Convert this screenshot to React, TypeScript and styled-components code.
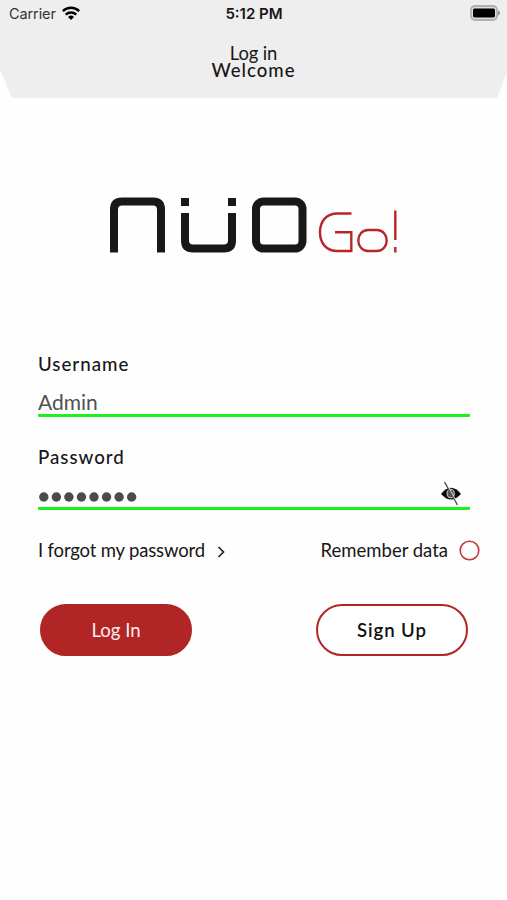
import React from 'react';
import styled, { createGlobalStyle } from 'styled-components';

const Global = createGlobalStyle`
  * { box-sizing: border-box; }
  body { margin: 0; background: #fefefe; }
`;

const Screen = styled.main`
  width: 507px;
  height: 900px;
  overflow: hidden;
  background: #fefefe;
  color: #171717;
  font-family: Lato, sans-serif;
  font-size: 18px;
`;

const Header = styled.header`
  height: 98px;
  background: #eee;
  clip-path: polygon(0 0, 100% 0, 100% 72px, 505px 77px, 497px 98px, 12px 98px, 2px 74px, 0 71px);
`;

const StatusBar = styled.div`
  height: 28px;
  padding: 0 6px 0 9px;
  display: grid;
  grid-template-columns: 1fr auto 1fr;
  align-items: center;
  font-family: Inter, sans-serif;
  font-size: 14.5px;
  line-height: 28px;
`;

const Carrier = styled.div`
  display: flex;
  align-items: center;
  gap: 6px;
  color: #333;
  letter-spacing: -0.1px;
  svg { margin-top: -2px; }
`;

const Clock = styled.div`
  margin-left: -2px;
  font-weight: 600;
  font-size: 15px;
`;

const Battery = styled.svg`
  justify-self: end;
  margin-top: -2px;
`;

const Titles = styled.div`
  padding-top: 17px;
`;

const Title = styled.h1<{ $spaced?: boolean }>`
  margin: 0;
  text-align: center;
  font-size: ${(p) => (p.$spaced ? '18.6px' : '18.4px')};
  line-height: 17px;
  font-weight: ${(p) => (p.$spaced ? 500 : 400)};
  letter-spacing: ${(p) => (p.$spaced ? '1px' : '-0.1px')};
`;

const Logo = styled.svg`
  display: block;
  margin: 92px 0 0 100px;
`;

const Form = styled.form`
  padding: 80px 37px 0 38px;
`;

const Field = styled.div`
  height: 93px;
`;

const Label = styled.label`
  display: block;
  height: 28px;
  line-height: 29px;
  font-size: 18.7px;
  font-weight: 500;
  letter-spacing: 1px;
`;

const InputRow = styled.div`
  height: 39px;
  padding: 0 8px 0 0;
  display: flex;
  justify-content: space-between;
  align-items: center;
  border-bottom: 3px solid #1cf01f;
  border-radius: 1px;
  color: #505050;
  font-size: 21px;
  line-height: 26px;
`;

const Value = styled.span`
  padding-top: 11px;
`;

const MaskedValue = styled.svg`
  margin: 16px 0 0 1px;
`;

const HiddenEye = styled.svg`
  margin-top: 8px;
`;

const Options = styled.div`
  height: 28px;
  margin-right: -10px;
  display: flex;
  justify-content: space-between;
  align-items: center;
  font-size: 18.5px;
`;

const Option = styled.div<{ $gap: number; $spacing: number }>`
  display: flex;
  align-items: center;
  gap: ${(p) => p.$gap}px;
  letter-spacing: ${(p) => p.$spacing}px;
`;

const Chevron = styled.svg`
  margin-top: 3px;
`;

const Actions = styled.div`
  margin-top: 40px;
  padding: 0 2px;
  display: flex;
  justify-content: space-between;
`;

const Button = styled.button<{ $primary?: boolean }>`
  width: 152px;
  height: 52px;
  padding: 0;
  border: 2px solid #b12525;
  border-radius: 26px;
  background: ${(p) => (p.$primary ? '#b12525' : '#fff')};
  color: ${(p) => (p.$primary ? '#fbeeee' : '#111')};
  font-family: inherit;
  font-size: 18.6px;
  font-weight: ${(p) => (p.$primary ? 400 : 600)};
  letter-spacing: ${(p) => (p.$primary ? '0' : '0.9px')};
`;

export default function App() {
  return (
    <Screen>
      <Global />
      <Header>
        <StatusBar>
          <Carrier>
            Carrier
            <svg width="18" height="14" viewBox="0 0 18 14" fill="none" stroke="#000" strokeWidth="2.5">
              <path d="M.8 5.1a11.8 11.8 0 0 1 16.4 0M3.7 8.6a7.7 7.7 0 0 1 10.6 0" />
              <path d="M6 11a4.4 4.4 0 0 1 6 0L9 14Z" fill="#000" stroke="none" />
            </svg>
          </Carrier>
          <Clock>5:12 PM</Clock>
          <Battery width="31" height="16" viewBox="0 0 31 16">
            <rect x="1" y="1" width="26" height="14" rx="4" fill="#ddd" stroke="#b0b0b0" strokeWidth="1.8" />
            <rect x="3" y="3.500" width="22" height="9" rx="1.500" fill="#000" />
            <path d="M28.500 5.8q2.500 2.200 0 4.400Z" fill="#999" stroke="#999" />
          </Battery>
        </StatusBar>
        <Titles>
          <Title>Log in</Title>
          <Title $spaced>Welcome</Title>
        </Titles>
      </Header>

      <Logo width="310" height="80" viewBox="100 190 310 80" fill="none" role="img" aria-label="NUO Go!">
        <g stroke="#1a1718" strokeWidth="8">
          <path d="M114 252.5V209.500Q114 201.500 122 201.500H153Q161 201.500 161 209.500V252.5" />
          <path d="M185 213V240.500Q185 248.500 193 248.500H224Q232 248.500 232 240.500V213" />
          <path d="M181 202H189M228 202H236" />
          <rect x="256" y="201.500" width="46.500" height="47" rx="7.500" />
        </g>
        <g stroke="#b8252b" strokeWidth="2.4">
          <path d="M351.500 213.500H337.500C326 213.500 320 221.500 320 232.300C320 243.500 326.500 251 337.500 251H351.300V232.200H335" />
          <path d="M368 230H377C383 230 386.700 235 386.700 240.500C386.700 246 383 251 377 251H368C362 251 358.300 246 358.300 240.500C358.300 235 362 230 368 230Z" />
          <path d="M395.300 210.500V240M395.300 247V252.500" />
        </g>
      </Logo>

      <Form onSubmit={(e: React.FormEvent) => e.preventDefault()}>
        <Field>
          <Label>Username</Label>
          <InputRow><Value>Admin</Value></InputRow>
        </Field>
        <Field>
          <Label>Password</Label>
          <InputRow>
            <MaskedValue width="100" height="10" fill="#4b4b4b">
              {Array.from({ length: 8 }, (_, i) => <circle key={i} cx={4.8 + i * 12.55} cy="5" r="4.7" />)}
            </MaskedValue>
            <HiddenEye width="22" height="26" viewBox="0 0 22 26">
              <path d="M1 14Q11 1.500 21 14Q11 25 1 14Z" fill="#080808" />
              <ellipse cx="10.700" cy="13.500" rx="3.600" ry="4.300" fill="#555" stroke="#ddd" strokeWidth="1" />
              <path d="M5.300 2L18.300 25" stroke="#fff" strokeWidth="1.4" />
              <path d="M4.500 2L17.500 25" stroke="#555" strokeWidth="1.500" />
            </HiddenEye>
          </InputRow>
        </Field>
        <Options>
          <Option $gap={12} $spacing={-0.17}>
            I forgot my password
            <Chevron width="8" height="12" viewBox="0 0 8 12" fill="none" stroke="#222" strokeWidth="1.7">
              <path d="M1.500 1L6.500 6L1.500 11" />
            </Chevron>
          </Option>
          <Option $gap={11} $spacing={0}>
            Remember data
            <svg width="21" height="21" viewBox="0 0 21 21" fill="none">
              <circle cx="10.500" cy="10.500" r="9.300" stroke="#c53b3e" strokeWidth="1.600" />
            </svg>
          </Option>
        </Options>
        <Actions>
          <Button $primary type="submit">Log In</Button>
          <Button type="button">Sign Up</Button>
        </Actions>
      </Form>
    </Screen>
  );
}
